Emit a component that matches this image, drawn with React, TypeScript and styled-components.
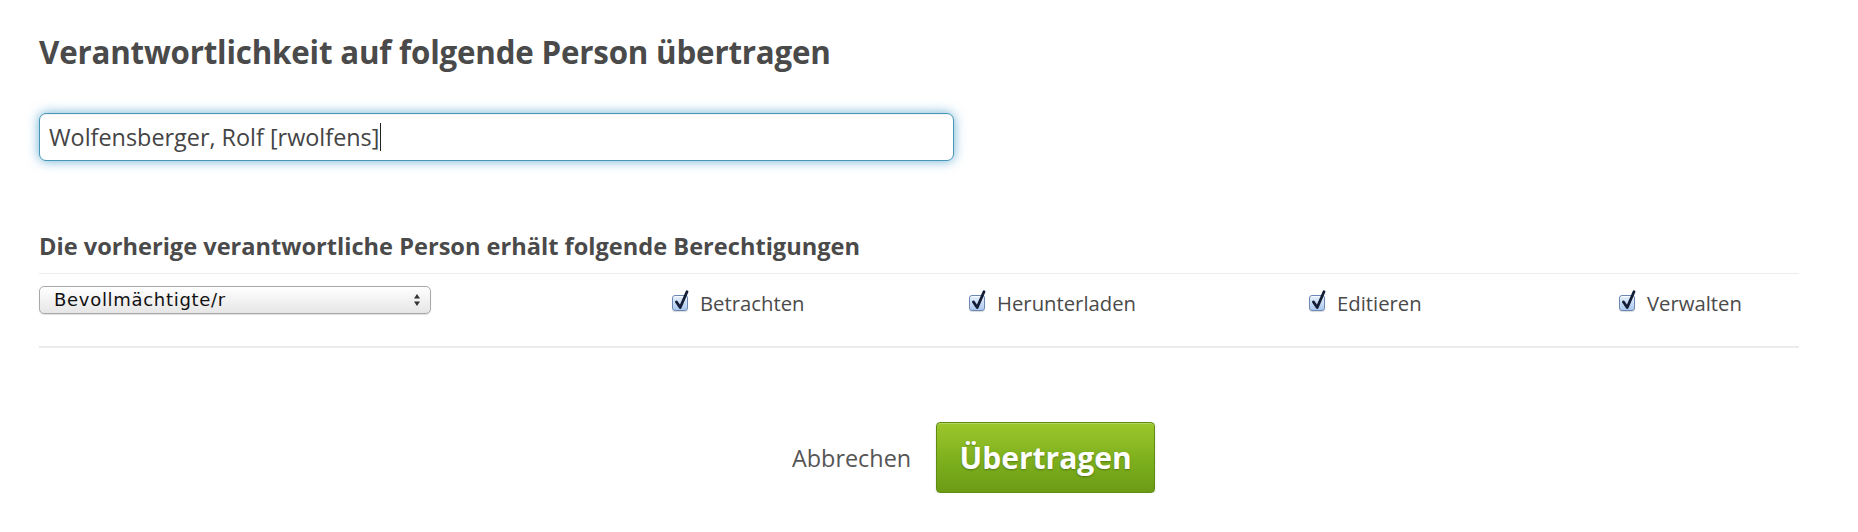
import React from "react";
import styled, { createGlobalStyle } from "styled-components";

const Global = createGlobalStyle`
  html, body { margin: 0; padding: 0; background: #ffffff; }
  body { font-family: "Open Sans", "Liberation Sans", sans-serif; color: #4a4a4a; }
`;

const Page = styled.div`
  width: 1760px;
  padding: 28px 0 0 39px;
  box-sizing: content-box;
`;

const Title = styled.h1`
  margin: 0;
  font-size: 31.3px;
  line-height: 48px;
  font-weight: 700;
  color: #4a4a4a;
  letter-spacing: -0.2px;
`;

const InputField = styled.div`
  margin-top: 37px;
  width: 915px;
  height: 48px;
  box-sizing: border-box;
  border: 1px solid #4896b8;
  border-radius: 7px;
  box-shadow: 0 0 12px rgba(60, 150, 200, 0.75), inset 0 1px 1px rgba(0, 0, 0, 0.06);
  background: #fff;
  display: flex;
  align-items: center;
  padding-left: 9px;
  font-size: 23.4px;
  color: #444;
`;

const Caret = styled.span`
  display: inline-block;
  width: 1px;
  height: 28px;
  background: #222;
  margin-left: 1px;
`;

const SubTitle = styled.h2`
  margin: 70px 0 0;
  font-size: 23.6px;
  line-height: 30px;
  font-weight: 700;
  color: #4a4a4a;
`;

const PermRow = styled.div`
  margin-top: 12px;
  border-top: 1px solid #ececec;
  border-bottom: 2px solid #ececec;
  height: 72px;
  display: grid;
  grid-template-columns: 633px 297px 340px 310px 1fr;
  align-items: start;
`;

const Cell = styled.div<{ $top: number }>`
  padding-top: ${(p) => p.$top}px;
  display: flex;
  align-items: center;
  height: 27px;
`;

const Select = styled.div`
  width: 392px;
  height: 28px;
  box-sizing: border-box;
  border: 1px solid #a8a8a8;
  border-radius: 5px;
  background: linear-gradient(#ffffff, #f1f1f1 55%, #e6e6e6);
  box-shadow: 0 1px 1px rgba(0, 0, 0, 0.12);
  display: flex;
  align-items: center;
  justify-content: space-between;
  padding: 0 9px 0 14px;
  font-family: "DejaVu Sans", "Liberation Sans", sans-serif;
  font-size: 18px;
  letter-spacing: 0.7px;
  color: #111;
`;

const Arrows = styled.svg`
  width: 8px;
  height: 14px;
`;

const CheckLabel = styled.label`
  display: flex;
  align-items: center;
  gap: 12px;
  font-size: 20.3px;
  color: #4a4a4a;
  cursor: pointer;
`;

const Box = styled.span`
  position: relative;
  width: 16px;
  height: 16px;
  box-sizing: border-box;
  border: 1px solid #6b87b3;
  border-radius: 3px;
  background: linear-gradient(#e6f0fc, #aac7ee);
  box-shadow: inset 0 1px 1px rgba(255, 255, 255, 0.8), 0 1px 1px rgba(0, 0, 0, 0.15);
`;

const Tick = styled.svg`
  position: absolute;
  left: 1px;
  top: -6px;
  width: 16px;
  height: 20px;
`;

const Footer = styled.div`
  display: flex;
  align-items: center;
  gap: 25px;
  padding-left: 753px;
  margin-top: 74px;
`;

const Cancel = styled.a`
  font-size: 23.4px;
  color: #555;
  text-decoration: none;
  cursor: pointer;
`;

const Submit = styled.button`
  width: 219px;
  height: 71px;
  border: 1px solid #5f8d12;
  border-radius: 4px;
  background: linear-gradient(#9cc72c, #7aad1c 60%, #6c9b15);
  box-shadow: inset 0 1px 0 rgba(255, 255, 255, 0.25), 0 1px 2px rgba(0, 0, 0, 0.15);
  color: #fff;
  font-family: "Open Sans", "Liberation Sans", sans-serif;
  font-weight: 700;
  font-size: 30px;
  text-shadow: 0 1px 2px rgba(0, 0, 0, 0.3);
  padding: 0;
  cursor: pointer;
`;

const Check: React.FC<{ label: string }> = ({ label }) => (
  <Cell $top={15}>
    <CheckLabel>
      <Box>
        <Tick viewBox="0 0 16 20">
          <path d="M2.5 12 L6.2 17.5 L13 1.8" fill="none" stroke="#131d36" strokeWidth="2.8" strokeLinecap="round" strokeLinejoin="round" />
        </Tick>
      </Box>
      {label}
    </CheckLabel>
  </Cell>
);

export default function App() {
  return (
    <>
      <Global />
      <Page>
        <Title>Verantwortlichkeit auf folgende Person übertragen</Title>
        <InputField>
          Wolfensberger, Rolf [rwolfens]
          <Caret />
        </InputField>
        <SubTitle>Die vorherige verantwortliche Person erhält folgende Berechtigungen</SubTitle>
        <PermRow>
          <Cell $top={12}>
            <Select>
              Bevollmächtigte/r
              <Arrows viewBox="0 0 8 14">
                <path d="M4 1 L7 5.5 H1 Z" fill="#333" />
                <path d="M4 13 L7 8.5 H1 Z" fill="#333" />
              </Arrows>
            </Select>
          </Cell>
          <Check label="Betrachten" />
          <Check label="Herunterladen" />
          <Check label="Editieren" />
          <Check label="Verwalten" />
        </PermRow>
        <Footer>
          <Cancel>Abbrechen</Cancel>
          <Submit>Übertragen</Submit>
        </Footer>
      </Page>
    </>
  );
}
